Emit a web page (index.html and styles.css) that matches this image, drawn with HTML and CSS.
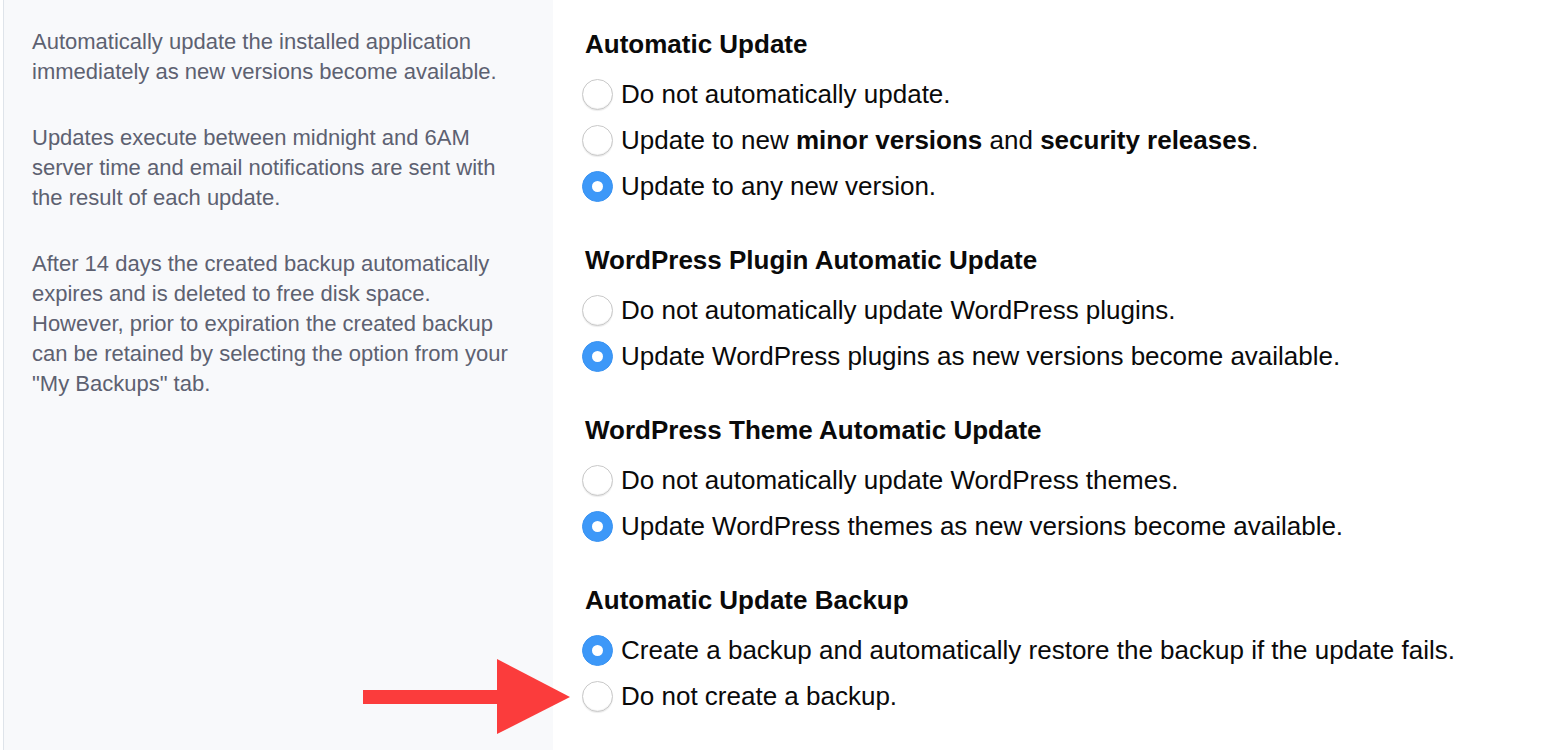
FILE: index.html
```html
<!DOCTYPE html>
<html lang="en">
<head>
<meta charset="utf-8">
<title>Automatic Update Settings</title>
<link rel="stylesheet" href="styles.css">
</head>
<body>
<div class="page">
  <aside class="help">
    <p>Automatically update the installed application immediately as new versions become available.</p>
    <p>Updates execute between midnight and 6AM server time and email notifications are sent with the result of each update.</p>
    <p>After 14 days the created backup automatically expires and is deleted to free disk space. However, prior to expiration the created backup can be retained by selecting the option from your "My Backups" tab.</p>
  </aside>
  <main class="settings">
    <section class="group">
      <h2 class="group-title">Automatic Update</h2>
      <label class="option"><span class="radio"></span><span class="label">Do not automatically update.</span></label>
      <label class="option"><span class="radio"></span><span class="label">Update to new <b>minor versions</b> and <b>security releases</b>.</span></label>
      <label class="option"><span class="radio checked"></span><span class="label">Update to any new version.</span></label>
    </section>
    <section class="group">
      <h2 class="group-title">WordPress Plugin Automatic Update</h2>
      <label class="option"><span class="radio"></span><span class="label">Do not automatically update WordPress plugins.</span></label>
      <label class="option"><span class="radio checked"></span><span class="label">Update WordPress plugins as new versions become available.</span></label>
    </section>
    <section class="group">
      <h2 class="group-title">WordPress Theme Automatic Update</h2>
      <label class="option"><span class="radio"></span><span class="label">Do not automatically update WordPress themes.</span></label>
      <label class="option"><span class="radio checked"></span><span class="label">Update WordPress themes as new versions become available.</span></label>
    </section>
    <section class="group">
      <h2 class="group-title">Automatic Update Backup</h2>
      <label class="option"><span class="radio checked"></span><span class="label">Create a backup and automatically restore the backup if the update fails.</span></label>
      <label class="option"><span class="radio"></span><span class="label">Do not create a backup.</span></label>
    </section>
  </main>
  <svg class="arrow" width="208" height="76" viewBox="0 0 208 76" aria-hidden="true">
    <rect x="0" y="31" width="136" height="14" fill="#fb3c3c"/>
    <polygon points="134,0 207,38 134,75" fill="#fb3c3c"/>
  </svg>
</div>
</body>
</html>
```

FILE: styles.css
```css
html, body {
  margin: 0;
  padding: 0;
  background: #ffffff;
}

body {
  font-family: "Liberation Sans", Arial, Helvetica, sans-serif;
}

.page {
  position: relative;
  display: flex;
  min-height: 750px;
  padding-left: 3px;
}

.help {
  flex: 0 0 auto;
  width: 486px;
  padding: 27px 35px 0 28px;
  background: #f8f9fb;
  border-left: 1px solid #dfe4ea;
  color: #5d6171;
  font-size: 22px;
  line-height: 30px;
}

.help p {
  margin: 0 0 36px 0;
}

.settings {
  flex: 1 1 auto;
  padding: 29px 0 0 29px;
  color: #0a0a0a;
}

.group {
  margin-bottom: 36px;
}

.group-title {
  margin: 0 0 12px 0;
  padding-left: 3px;
  font-size: 26px;
  line-height: 30px;
  font-weight: bold;
}

.option {
  display: flex;
  align-items: center;
  height: 46px;
  gap: 8px;
  font-size: 26px;
}

.label b {
  font-weight: bold;
}

.radio {
  flex: 0 0 auto;
  box-sizing: border-box;
  width: 31px;
  height: 31px;
  border-radius: 50%;
  background: #ffffff;
  border: 1px solid #c9c9c9;
  box-shadow: inset 0 -1px 1px rgba(0, 0, 0, 0.06), 0 1px 1px rgba(0, 0, 0, 0.08);
  display: flex;
  align-items: center;
  justify-content: center;
}

.radio.checked {
  background: #3d98f8;
  border-color: #3a93f2;
  box-shadow: none;
}

.radio.checked::after {
  content: "";
  width: 11px;
  height: 11px;
  border-radius: 50%;
  background: #ffffff;
}

.arrow {
  position: absolute;
  left: 363px;
  top: 659px;
}
```
